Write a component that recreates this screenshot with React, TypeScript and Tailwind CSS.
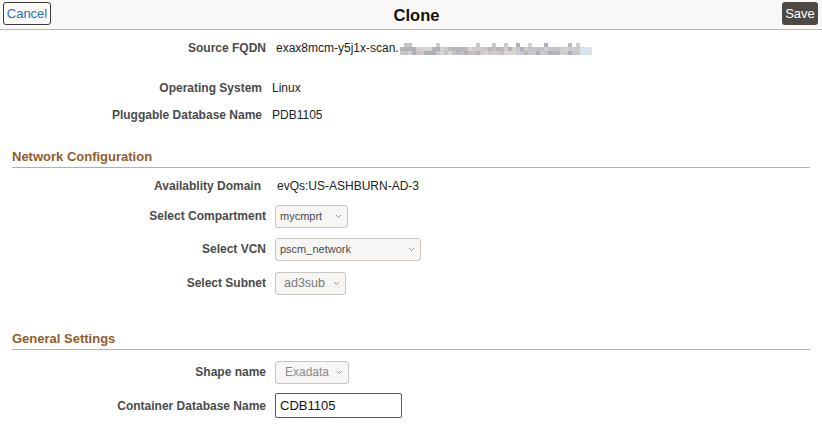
import React from "react";

const Chevron = () => (
  <svg width="7" height="5" viewBox="0 0 7 5" className="shrink-0">
    <polyline points="1,1 3.5,3.5 6,1" fill="none" stroke="#9a9692" strokeWidth="1" />
  </svg>
);

function Row({
  label,
  children,
  className,
  labelW = "w-[266px]",
  gap = "ml-[9px]",
}: {
  label: string;
  children: React.ReactNode;
  className: string;
  labelW?: string;
  gap?: string;
}) {
  return (
    <div className={"flex items-center " + className}>
      <div className={"shrink-0 text-right text-[12px] font-bold text-[#4b4b4b] " + labelW}>{label}</div>
      <div className={"flex items-center text-[12px] text-[#222] " + gap}>{children}</div>
    </div>
  );
}

function FakeSelect({ text, width, textClass }: { text: string; width: string; textClass: string }) {
  return (
    <div
      className={
        "flex h-[23px] items-center justify-between rounded-[3px] border border-[#c9c5c1] bg-[#f7f6f5] pr-[5px] " + width
      }
    >
      <span className={textClass}>{text}</span>
      <Chevron />
    </div>
  );
}

function Section({ title, className }: { title: string; className: string }) {
  return (
    <div className={"mx-[12px] border-b border-[#b3afab] pb-[2px] text-[13px] font-bold leading-[16px] text-[#935b2b] " + className}>
      {title}
    </div>
  );
}

const palette = ["#cdc7c6", "#bfb9ba", "#c8c6cc", "#b8b3b6", "#d4d0cd", "#b4b8c0", "#c6c0bf", "#cecbd0", "#aab0bc", "#d9d5d2", "#c2c4c8"];

function Mosaic() {
  const rects: React.ReactNode[] = [];
  let seed = 11;
  const rnd = () => {
    seed = (seed * 9301 + 49297) % 233280;
    return seed / 233280;
  };
  const cols = 48;
  for (let c = 0; c < cols; c++) {
    for (let r = 0; r < 3; r++) {
      const v = rnd();
      if (r === 0 && v < 0.7) continue;
      const col = c > 44 ? (r === 1 ? "#d6e8ef" : "#d2e3ea") : palette[Math.floor(rnd() * palette.length)];
      rects.push(<rect key={c + "-" + r} x={c * 4} y={r * 4} width={4} height={4} fill={col} />);
    }
  }
  return (
    <svg width="192" height="12" viewBox="0 0 192 12" className="ml-[1px] mt-[2px] shrink-0" style={{ filter: "blur(0.4px)" }}>
      {rects}
    </svg>
  );
}

export default function App() {
  return (
    <div className="h-[431px] w-[822px] overflow-hidden bg-white" style={{ fontFamily: '"Liberation Sans", Arial, sans-serif' }}>
      <div className="flex h-[30px] items-start border-b border-[#bcb8b3] bg-[#f9f8f6] px-[3px] pt-[2px]">
        <button className="h-[23px] w-[48px] shrink-0 rounded-[3px] border border-[#3b3b3b] bg-[#fbfaf9] text-[13px] leading-[20px] text-[#2a6fbd]">
          Cancel
        </button>
        <div className="flex-1 pt-[3px] text-center text-[16.5px] font-bold leading-[20px] text-[#111]">Clone</div>
        <button className="mr-[1px] h-[23px] w-[36px] shrink-0 rounded-[3px] bg-[#4f4944] text-[13px] leading-[22px] text-white">
          Save
        </button>
      </div>

      <Row label="Source FQDN" className="mt-[6px] h-[24px]" gap="ml-[10px]">
        <span>exax8mcm-y5j1x-scan.</span>
        <Mosaic />
      </Row>
      <Row label="Operating System" className="mt-[16px] h-[24px]" labelW="w-[262px]" gap="ml-[10px]">
        <span>Linux</span>
      </Row>
      <Row label="Pluggable Database Name" className="mt-[3px] h-[24px]" labelW="w-[262px]" gap="ml-[10px]">
        <span>PDB1105</span>
      </Row>

      <Section title="Network Configuration" className="mt-[22px]" />

      <Row label="Availablity Domain" className="mt-[6px] h-[24px]" labelW="w-[261px]" gap="ml-[16px]">
        <span>evQs:US-ASHBURN-AD-3</span>
      </Row>
      <Row label="Select Compartment" className="mt-[6px] h-[24px]">
        <FakeSelect text="mycmprt" width="w-[73px]" textClass="pl-[4px] text-[11px] text-[#4a4a4a]" />
      </Row>
      <Row label="Select VCN" className="mt-[9px] h-[24px]">
        <FakeSelect text="pscm_network" width="w-[146px]" textClass="pl-[4px] text-[11px] text-[#4a4a4a]" />
      </Row>
      <Row label="Select Subnet" className="mt-[10px] h-[24px]">
        <FakeSelect text="ad3sub" width="w-[71px]" textClass="pl-[8px] text-[12.5px] text-[#7a7a7a]" />
      </Row>

      <Section title="General Settings" className="mt-[36px]" />

      <Row label="Shape name" className="mt-[10px] h-[24px]">
        <FakeSelect text="Exadata" width="w-[74px]" textClass="pl-[9px] text-[12px] text-[#8a8a8a]" />
      </Row>
      <Row label="Container Database Name" className="mt-[9px] h-[25px]">
        <div className="flex h-[25px] w-[127px] items-center rounded-[2px] border border-[#5a5a5a] bg-white pl-[4px] text-[13px] text-[#111]">
          CDB1105
        </div>
      </Row>
    </div>
  );
}
